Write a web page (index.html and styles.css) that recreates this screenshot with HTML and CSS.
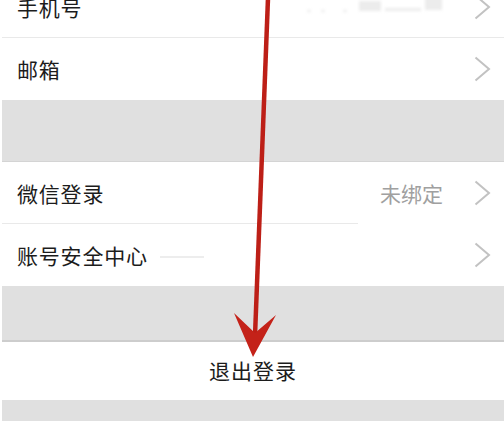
FILE: index.html
```html
<!DOCTYPE html>
<html lang="zh-CN">

<head>
    <meta charset="UTF-8">
    <meta name="viewport" content="width=device-width, initial-scale=1.0">
    <title>账号设置</title>
    <link rel="stylesheet" href="styles.css">
</head>

<body>
    <div class="page">
        <div class="group group-first">
            <div class="row row-line">
                <span class="label">手机号</span>
                <span class="value">
                    <span class="masked">
                        <i class="dot d1"></i><i class="dot d2"></i><i class="dot d3"></i>
                        <i class="blot b1"></i><i class="blot b2"></i><i class="blot b3"></i>
                    </span>
                </span>
                <svg class="chevron" width="17" height="26" viewBox="0 0 17 26"><polyline points="1.5,1.5 15,13 1.5,24.5" /></svg>
            </div>
            <div class="row">
                <span class="label">邮箱</span>
                <span class="value"></span>
                <svg class="chevron" width="17" height="26" viewBox="0 0 17 26"><polyline points="1.5,1.5 15,13 1.5,24.5" /></svg>
            </div>
        </div>

        <div class="spacer spacer-tall"></div>

        <div class="group">
            <div class="row row-line row-line-short">
                <span class="label">微信登录</span>
                <span class="value">未绑定</span>
                <svg class="chevron" width="17" height="26" viewBox="0 0 17 26"><polyline points="1.5,1.5 15,13 1.5,24.5" /></svg>
            </div>
            <div class="row">
                <span class="label">账号安全中心</span>
                <span class="smudge"></span>
                <span class="value"></span>
                <svg class="chevron" width="17" height="26" viewBox="0 0 17 26"><polyline points="1.5,1.5 15,13 1.5,24.5" /></svg>
            </div>
        </div>

        <div class="spacer spacer-mid"></div>

        <div class="logout">退出登录</div>

        <div class="spacer spacer-end"></div>
    </div>

    <!-- red pointer drawn over the list -->
    <svg class="pointer" width="504" height="421" viewBox="0 0 504 421">
        <line x1="268" y1="-2" x2="255" y2="336" stroke="#bd1f17" stroke-width="4.5" />
        <polygon points="253,357 234,313 255,333 276,315" fill="#c42219" />
    </svg>
</body>

</html>
```

FILE: styles.css
```css
* {
    margin: 0;
    padding: 0;
    box-sizing: border-box;
}

body {
    font-family: "Noto Sans CJK SC", "Noto Sans", sans-serif;
    color: #1c1c1c;
    background: #fff;
    width: 504px;
    height: 421px;
    overflow: hidden;
    position: relative;
}

.page {
    margin-left: 2px;
}

.group {
    background: #fff;
}

/* first row is scrolled partly out of view */
.group-first {
    margin-top: -24px;
}

.row {
    display: flex;
    align-items: center;
    height: 62px;
    padding: 0 13px 0 15px;
    position: relative;
}

.row-line::after {
    content: "";
    position: absolute;
    left: 0;
    right: 0;
    bottom: 0;
    height: 1px;
    background: #e9e9e9;
}

.row-line-short::after {
    right: 146px;
}

.label {
    font-size: 21px;
    line-height: 1;
    letter-spacing: 0.8px;
}

.value {
    flex: 1;
    text-align: right;
    font-size: 21px;
    line-height: 1;
    color: #a0a0a0;
    padding-right: 31px;
}

.chevron {
    fill: none;
    stroke: #c2c2c2;
    stroke-width: 2;
}

/* blurred phone number */
.masked {
    display: inline-block;
    position: relative;
    width: 140px;
    height: 24px;
    vertical-align: middle;
    filter: blur(1.5px);
}

.masked i {
    position: absolute;
    background: #ececec;
}

.dot {
    width: 4px;
    height: 2px;
    top: 14px;
}

.d1 { left: 4px; }
.d2 { left: 18px; }
.d3 { left: 40px; }

.b1 { left: 56px; top: 5px; width: 22px; height: 10px; }
.b2 { left: 82px; top: 12px; width: 36px; height: 3px; }
.b3 { left: 122px; top: 1px; width: 17px; height: 13px; }

.smudge {
    width: 44px;
    height: 2px;
    margin-left: 12px;
    margin-top: 4px;
    background: #ededed;
    filter: blur(0.6px);
}

.spacer {
    background: #e0e0e0;
}

.spacer-tall {
    height: 62px;
    border-bottom: 1px solid #d4d4d4;
}

.spacer-mid {
    height: 56px;
    border-bottom: 2px solid #cdcdcd;
}

.spacer-end {
    height: 30px;
}

.logout {
    height: 58px;
    display: flex;
    align-items: center;
    justify-content: center;
    font-size: 21px;
    letter-spacing: 1px;
    padding-bottom: 2px;
}

.pointer {
    position: absolute;
    left: 0;
    top: 0;
    pointer-events: none;
}
```
